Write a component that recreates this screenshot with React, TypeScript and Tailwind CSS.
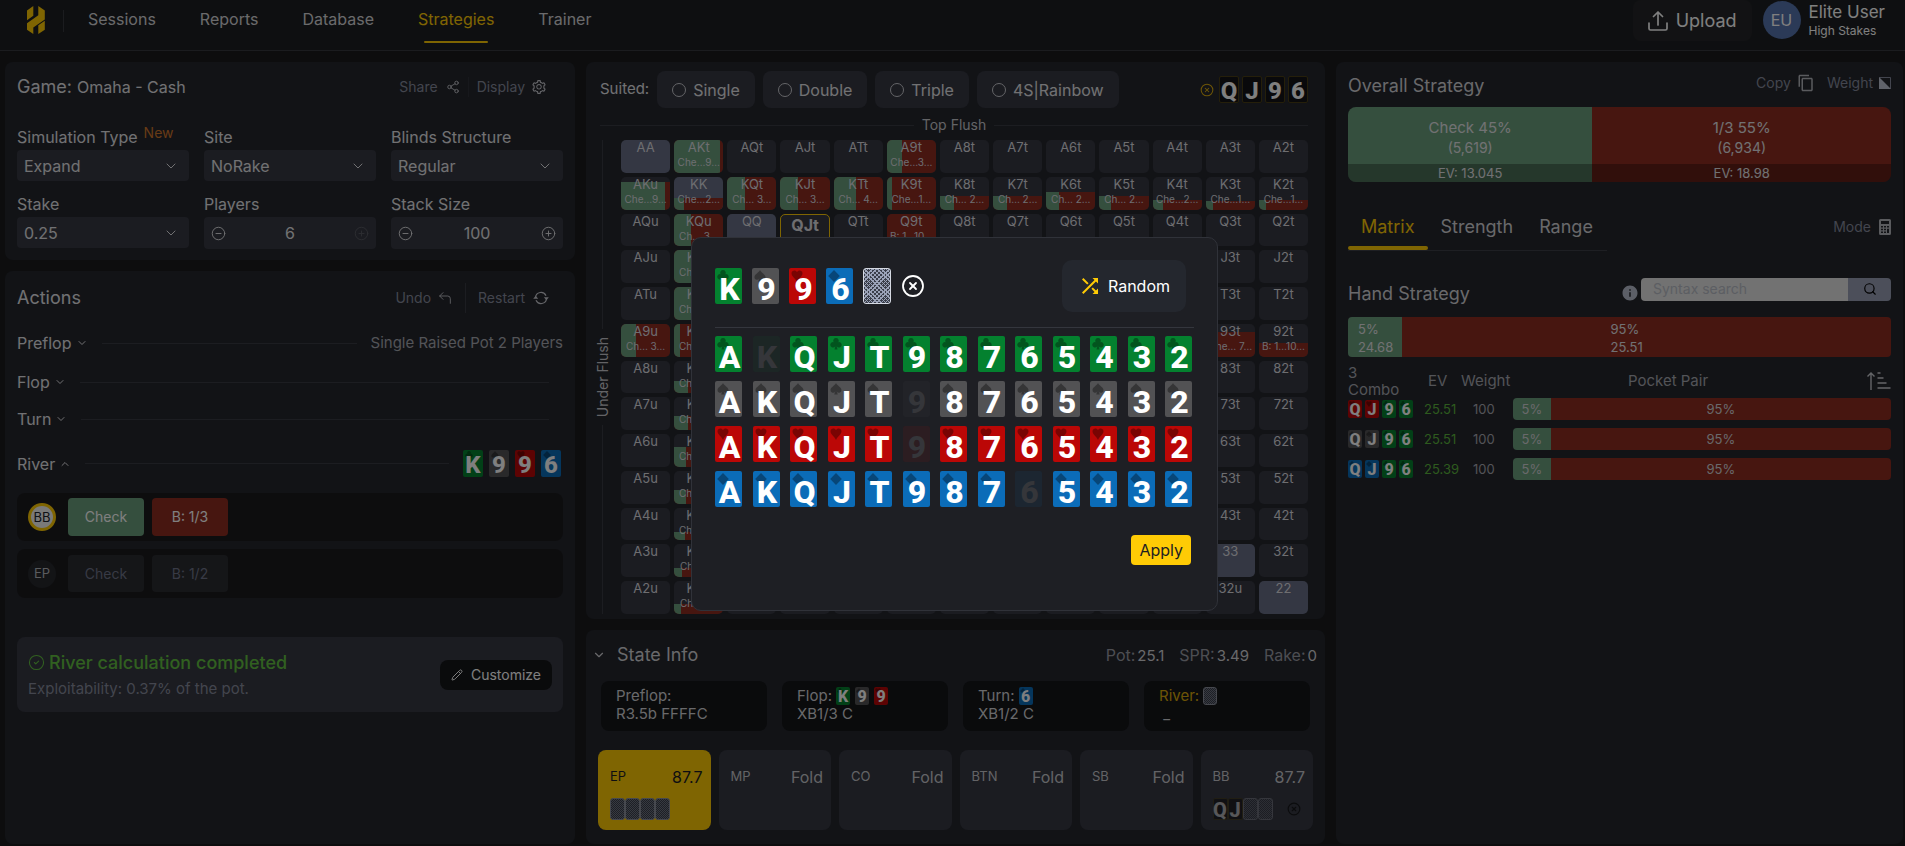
import type { ReactNode } from 'react'
import clsx from 'clsx'
import {
  ChevronDown,
  ChevronUp,
  CircleCheck,
  CircleMinus,
  CirclePlus,
  CircleX,
  CornerUpLeft,
  Pencil,
  Search,
  Share2,
} from 'lucide-react'
import { AiOutlineSetting } from 'react-icons/ai'
import { MdContentCopy, MdInfo, MdOutlineShuffle } from 'react-icons/md'

type Suit = 'c' | 's' | 'h' | 'd'
type CardSize = 'lg' | 'md' | 'sm' | 'seat'

const RANKS = ['A', 'K', 'Q', 'J', 'T', '9', '8', '7', '6', '5', '4', '3', '2']
const SUITS: Suit[] = ['c', 's', 'h', 'd']

const suitPath: Record<Suit, string> = {
  c: 'M6 0a2.700 2.700 0 0 1 2.300 4.200A2.700 2.700 0 1 1 6.700 8.300L7.500 11.500h-3L5.300 8.300A2.700 2.700 0 1 1 3.700 4.200 2.700 2.700 0 0 1 6 0z',
  s: 'M6 0c1 2.500 5.500 4.200 5.500 7a2.500 2.500 0 0 1-4.800 1.200L7.800 11.500H4.200L5.300 8.200A2.500 2.500 0 0 1 .5 7C.5 4.200 5 2.500 6 0z',
  h: 'M6 2C7-.300 11.500-.300 11.500 3.300 11.500 6.500 7.500 8.500 6 12 4.500 8.500.5 6.500.5 3.300.5-.300 5-.300 6 2z',
  d: 'M6 0l5.800 6L6 12 .2 6z',
}

const suitColor: Record<Suit, string> = {
  c: 'bg-[#04812f]',
  s: 'bg-[#525254]',
  h: 'bg-[#bb0706]',
  d: 'bg-[#0b6cb8]',
}

const usedColor: Record<Suit, string> = {
  c: 'bg-[#1c2625]',
  s: 'bg-[#222328]',
  h: 'bg-[#2c1d21]',
  d: 'bg-[#1c2631]',
}

const cardSize: Record<CardSize, string> = {
  lg: 'h-9 w-[27px] text-[32px] pl-0.5 pt-[5px]',
  md: 'h-[27px] w-5 text-[24px] pt-[3px]',
  sm: 'h-[18px] w-[14px] text-[16px] pt-0.5',
  seat: 'h-[22px] w-[15px] text-[20px] pt-0.5',
}

const pipSize: Record<CardSize, string> = {
  lg: 'left-0.5 top-0.5 size-3',
  md: 'left-0.5 top-px size-2',
  sm: 'left-px top-px size-1.5',
  seat: 'left-px top-px size-1.5',
}

function Card({ rank, suit, size = 'md', used }: { rank: string; suit?: Suit; size?: CardSize; used?: boolean }) {
  const color = suit ? (used ? usedColor[suit] : suitColor[suit]) : 'border border-[#4a3f14] bg-[#121316]'
  return (
    <span
      className={clsx(
        'relative flex shrink-0 items-center justify-center rounded-[2px] font-[Roboto,sans-serif] font-extrabold leading-none',
        cardSize[size],
        color,
        used ? 'text-[#35363a]' : 'text-white',
      )}
    >
      {suit && !used && (
        <svg viewBox="0 0 12 12" className={clsx('absolute fill-black/35', pipSize[size])}>
          <path d={suitPath[suit]} />
        </svg>
      )}
      <span className="relative">{rank}</span>
    </span>
  )
}

function CardBack({ className, bright }: { className: string; bright?: boolean }) {
  return (
    <span
      className={clsx(
        'shrink-0 rounded-[3px] border bg-[#3a3e4a]',
        bright
          ? 'border-[#d5d9e2] [background-image:repeating-linear-gradient(45deg,#9aa2b8_0_1px,transparent_1px_3px),repeating-linear-gradient(-45deg,#9aa2b8_0_1px,transparent_1px_3px)]'
          : 'border-[#8d919d] bg-[length:2px_2px] [background-image:conic-gradient(#6f7482_0_25%,#3a3e4a_0_50%,#6f7482_0_75%,#3a3e4a_0)]',
        className,
      )}
    />
  )
}

function Panel({ className, children }: { className?: string; children: ReactNode }) {
  return <section className={clsx('rounded-lg bg-[#24262d]', className)}>{children}</section>
}

/* ---------- header ---------- */

function Logo() {
  return (
    <svg viewBox="0 0 18 28" className="h-7 w-[18px]" fill="#ffcb05">
      <path d="M0 4.500 6.300 0v9.800L0 14.300zM11.300 0l6.500 4.500v9L6.300 21.500V28L0 23.800v-6.600l11.300-7.900zM11.300 19.300l6.500-4.600v9.100L11.300 28z" />
    </svg>
  )
}

function Header() {
  const links = ['Sessions', 'Reports', 'Database', 'Strategies', 'Trainer']
  return (
    <header className="flex h-[51px] shrink-0 items-start border-b border-[#36383e] bg-[#1d1f22] pl-[27px] pr-5">
      <a href="#home" aria-label="Home" className="mt-1.5">
        <Logo />
      </a>
      <div className="ml-[18px] mt-2.5 h-[22px] w-px bg-[#36383e]" />
      <nav className="ml-0.5 flex">
        {links.map((link) => (
          <a
            key={link}
            href={`#${link.toLowerCase()}`}
            className={clsx(
              'relative flex h-[43px] items-start px-[22px] pt-[7px] text-base leading-6',
              link === 'Strategies' ? 'text-[#ffcb05]' : 'text-[#d5d5d8]',
            )}
          >
            {link}
            {link === 'Strategies' && <span className="absolute inset-x-7 bottom-0 h-0.5 rounded bg-[#ffcb05]" />}
          </a>
        ))}
      </nav>
      <button className="ml-auto flex h-[41px] items-center gap-2 rounded-lg bg-[#242528] px-[15px] text-lg text-white">
        <svg viewBox="0 0 20 20" className="size-5" fill="none" stroke="currentColor" strokeWidth="1.700" strokeLinecap="round" strokeLinejoin="round">
          <path d="M10 14V1.500M5.500 5.500 10 1l4.500 4.500M1 12v5.500A1.500 1.500 0 0 0 2.500 19h15a1.500 1.500 0 0 0 1.500-1.500V12" />
        </svg>
        Upload
      </button>
      <div className="ml-[11px] mt-px flex gap-2">
        <span className="flex size-[38px] items-center justify-center rounded-full bg-[#5674ae] text-base text-white">EU</span>
        <div className="text-white">
          <div className="text-[17px] leading-[22px]">Elite User</div>
          <div className="text-xs leading-4">High Stakes</div>
        </div>
      </div>
    </header>
  )
}

/* ---------- left column ---------- */

function Field({ id, label, badge, children }: { id: string; label: string; badge?: string; children: ReactNode }) {
  return (
    <div className="min-w-0">
      <label htmlFor={id} className="flex h-[26px] items-center text-base leading-5 text-[#e3e3e6]">
        {label}
        {badge && <span className="mb-2 ml-1.5 text-sm leading-5 text-[#d0762a]">{badge}</span>}
      </label>
      {children}
    </div>
  )
}

function SelectField({ id, label, badge, value }: { id: string; label: string; badge?: string; value: string }) {
  return (
    <Field id={id} label={label} badge={badge}>
      <div className="relative">
        <select id={id} className="h-[31px] w-full appearance-none rounded bg-[#363842] px-[7px] text-base text-[#e3e3e6]">
          <option>{value}</option>
        </select>
        <ChevronDown className="pointer-events-none absolute right-2.5 top-2 size-4 text-[#e3e3e6]" strokeWidth={1.5} />
      </div>
    </Field>
  )
}

function StepperField({ id, label, value, maxed }: { id: string; label: string; value: string; maxed?: boolean }) {
  return (
    <Field id={id} label={label}>
      <div className="flex h-8 items-center rounded bg-[#363842] px-[7px] text-[#e3e3e6]">
        <button aria-label={`Decrease ${label}`}>
          <CircleMinus className="size-[15px]" strokeWidth={1.5} />
        </button>
        <input id={id} className="w-0 flex-1 bg-transparent text-center text-base" defaultValue={value} />
        <button aria-label={`Increase ${label}`} disabled={maxed} className="disabled:opacity-20">
          <CirclePlus className="size-[15px]" strokeWidth={1.5} />
        </button>
      </div>
    </Field>
  )
}

function GamePanel() {
  return (
    <Panel className="px-3 pb-[11px] pt-3">
      <div className="flex h-[26px] items-center">
        <h2 className="text-lg text-[#e3e3e6]">
          Game: <span className="text-base">Omaha - Cash</span>
        </h2>
        <div className="ml-auto mr-4 flex items-center text-sm text-[#868b9c]">
          <button className="flex items-center gap-2 pr-2">
            Share <Share2 className="size-[14px] text-[#c9cad0]" strokeWidth={1.5} />
          </button>
          <button className="flex items-center gap-1.5 border-l border-[#2f3139] pl-2">
            Display <AiOutlineSetting className="size-4 text-[#c9cad0]" />
          </button>
        </div>
      </div>
      <div className="mt-6 grid grid-cols-3 gap-x-[15px] gap-y-2.5">
        <SelectField id="sim" label="Simulation Type" badge="New" value="Expand" />
        <SelectField id="site" label="Site" value="NoRake" />
        <SelectField id="blinds" label="Blinds Structure" value="Regular" />
        <SelectField id="stake" label="Stake" value="0.25" />
        <StepperField id="players" label="Players" value="6" maxed />
        <StepperField id="stack" label="Stack Size" value="100" />
      </div>
    </Panel>
  )
}

function Street({ name, open, className, children }: { name: string; open?: boolean; className: string; children?: ReactNode }) {
  const Chevron = open ? ChevronUp : ChevronDown
  return (
    <div className={clsx('flex items-center text-[#e3e3e6]', className)}>
      <button className="flex items-center gap-1">
        {name} <Chevron className="size-3" strokeWidth={2} />
      </button>
      <div className="mx-3.5 h-px flex-1 bg-[#383a43]" />
      {children}
    </div>
  )
}

function ActionsPanel() {
  return (
    <Panel className="flex-1 px-3 pt-3">
      <div className="flex h-[30px] items-center">
        <h2 className="text-lg text-[#e3e3e6]">Actions</h2>
        <div className="ml-auto mr-[14px] flex h-full items-center text-sm text-[#868b9c]">
          <button className="flex h-full items-center gap-1.5 pr-3">
            Undo <CornerUpLeft className="size-4 text-[#c9cad0]" strokeWidth={1.3} />
          </button>
          <button className="flex h-full items-center gap-2 border-l border-[#383a43] pl-3">
            Restart
            <svg viewBox="0 0 16 14" className="h-3.5 w-4 text-[#c9cad0]" fill="none" stroke="currentColor" strokeWidth="1.200">
              <path d="M2.500 6.500A5.500 5.500 0 0 1 13 4.700M13.500 7.500A5.500 5.500 0 0 1 3 9.300" />
              <path d="M10.800 6.300h5l-2.300 3zM.2 7.700h5l-2.500-3z" fill="currentColor" stroke="none" />
            </svg>
          </button>
        </div>
      </div>
      <Street name="Preflop" className="mt-[18px] h-6">
        <span className="text-[15px] text-[#a6a8b0]">Single Raised Pot 2 Players</span>
      </Street>
      <Street name="Flop" className="mt-[15px] h-6" />
      <Street name="Turn" className="mt-[13px] h-6" />
      <Street name="River" open className="mt-[19px] h-[27px]">
        <div className="flex gap-1.5 pr-0.5">
          <Card rank="K" suit="c" />
          <Card rank="9" suit="s" />
          <Card rank="9" suit="h" />
          <Card rank="6" suit="d" />
        </div>
      </Street>

      <div className="mt-4 flex h-12 items-center gap-2 rounded-lg bg-[#1b1b1d] px-[11px] text-sm">
        <span className="mr-1 flex size-7 items-center justify-center rounded-full border-[3px] border-[#ffcb05] bg-[#f4f4f4] text-[13px] text-[#22252c]">
          BB
        </span>
        <button className="h-[38px] w-[76px] rounded bg-[#6a9e7c] text-white">Check</button>
        <button className="h-[38px] w-[76px] rounded bg-[#8e2c20] text-white">B: 1/3</button>
      </div>
      <div className="mt-2 flex h-[49px] items-center gap-2 rounded-lg bg-[#1b1b1d] px-[11px] text-sm">
        <span className="mr-1 flex size-7 items-center justify-center rounded-full bg-[#26282d] text-[13px] text-[#b5b7bd]">EP</span>
        <button className="h-[37px] w-[76px] rounded bg-[#2a2c31] text-[#70758a]">Check</button>
        <button className="h-[37px] w-[76px] rounded bg-[#2a2c31] text-[#70758a]">B: 1/2</button>
      </div>

      <div className="mt-[39px] flex h-[75px] items-center rounded-lg bg-[#363842] px-[11px]">
        <div>
          <p className="flex items-center gap-1 text-lg font-medium leading-7 text-[#62c040]">
            <CircleCheck className="size-[17px]" strokeWidth={1.5} /> River calculation completed
          </p>
          <p className="text-[15px] leading-6 text-[#868b9c]">Exploitability: 0.37% of the pot.</p>
        </div>
        <button className="ml-auto flex h-[30px] items-center gap-2 rounded-lg bg-[#141618] px-[11px] text-sm text-white">
          <Pencil className="size-3" strokeWidth={2} /> Customize
        </button>
      </div>
    </Panel>
  )
}

/* ---------- strategy matrix ---------- */

interface Fill {
  text: string
  height: number
  check: number
}

const fills: Record<string, Fill> = {
  AKt: { text: 'Che…9…', height: 100, check: 93 },
  A9t: { text: 'Che…3…', height: 100, check: 30 },
  AKu: { text: 'Che…9…', height: 84, check: 90 },
  KK: { text: 'Che…2…', height: 36, check: 20 },
  KQt: { text: 'Ch… 3…', height: 100, check: 37 },
  KJt: { text: 'Ch… 3…', height: 100, check: 35 },
  KTt: { text: 'Ch… 4…', height: 100, check: 45 },
  K9t: { text: 'Che…1…', height: 100, check: 10 },
  K8t: { text: 'Ch… 2…', height: 42, check: 28 },
  K7t: { text: 'Ch… 2…', height: 42, check: 28 },
  K6t: { text: 'Ch… 2…', height: 54, check: 27 },
  K5t: { text: 'Ch… 2…', height: 42, check: 24 },
  K4t: { text: 'Che…2…', height: 30, check: 22 },
  K3t: { text: 'Che…1…', height: 27, check: 14 },
  K2t: { text: 'Che…1…', height: 30, check: 14 },
  KQu: { text: 'Ch… 3…', height: 100, check: 35 },
  Q9t: { text: 'B: 1…10…', height: 100, check: 0 },
  KJu: { text: 'Ch… 3…', height: 100, check: 35 },
  KTu: { text: 'Ch… 4…', height: 100, check: 42 },
  K9u: { text: 'Che…1…', height: 100, check: 12 },
  K8u: { text: 'Ch… 2…', height: 39, check: 28 },
  K7u: { text: 'Ch… 2…', height: 42, check: 28 },
  K6u: { text: 'Ch… 2…', height: 60, check: 24 },
  K5u: { text: 'Ch… 2…', height: 42, check: 24 },
  K4u: { text: 'Ch… 2…', height: 27, check: 22 },
  K3u: { text: 'Ch… 1…', height: 27, check: 16 },
  K2u: { text: 'Ch… 1…', height: 30, check: 14 },
  A9u: { text: 'Ch… 3…', height: 100, check: 30 },
  '93t': { text: 'Che… 7…', height: 76, check: 6 },
  '92t': { text: 'B: 1…10…', height: 42, check: 0 },
}

function handName(row: number, col: number) {
  if (row === col) return RANKS[row] + RANKS[col]
  return col > row ? `${RANKS[row]}${RANKS[col]}t` : `${RANKS[col]}${RANKS[row]}u`
}

function MatrixCell({ row, col }: { row: number; col: number }) {
  const name = handName(row, col)
  const fill = fills[name]
  const selected = name === 'QJt'
  return (
    <button
      className={clsx(
        'relative flex min-w-0 flex-col items-center overflow-hidden rounded-[5px] text-[#dcdce0]',
        row === col ? 'bg-[#686e86]' : 'bg-[#363842]',
        selected && 'border border-[#ffcb05] pt-0.5',
      )}
    >
      {fill && (
        <span className="absolute inset-x-0 bottom-0 flex bg-[#8e2c20]" style={{ height: `${fill.height}%` }}>
          <span className="bg-[#6a9e7c]" style={{ width: `${fill.check}%` }} />
        </span>
      )}
      <span className={clsx('relative', selected ? 'text-base font-bold leading-4' : 'text-[13px] leading-[15px]')}>{name}</span>
      {fill && <span className="relative whitespace-nowrap text-[10px] leading-[14px]">{fill.text}</span>}
    </button>
  )
}

function MatrixPanel() {
  const filters = ['Single', 'Double', 'Triple', '4S|Rainbow']
  return (
    <Panel className="flex flex-1 flex-col pb-[5px] pl-2.5 pr-[17px] pt-[9px]">
      <div className="flex items-center gap-2 pl-1">
        <span className="text-[15px] text-[#e3e3e6]">Suited:</span>
        {filters.map((name) => (
          <label key={name} className="flex h-[37px] items-center gap-[7px] rounded-lg bg-[#363842] px-[15px] text-base text-[#e3e3e6]">
            <input type="radio" name="suited" className="size-[14px] appearance-none rounded-full border border-[#c9cad0]" />
            {name}
          </label>
        ))}
        <div className="ml-auto flex items-center gap-[3px]">
          <button aria-label="Clear hand" className="mr-0.5 text-[#d9a90c]">
            <CircleX className="size-[14px]" strokeWidth={1.8} />
          </button>
          <Card rank="Q" />
          <Card rank="J" />
          <Card rank="9" />
          <Card rank="6" />
        </div>
      </div>

      <div className="mt-1.5 flex h-[22px] items-center gap-2 pl-1 text-sm text-[#c6c7cc]">
        <div className="h-px flex-1 bg-[#383a43]" />
        Top Flush
        <div className="h-px flex-1 bg-[#383a43]" />
      </div>

      <div className="mt-1 flex flex-1 gap-3">
        <div className="flex w-[13px] flex-col items-center gap-2 text-sm leading-[13px] text-[#c6c7cc]">
          <div className="w-px flex-1 bg-[#383a43]" />
          <span className="rotate-180 [writing-mode:vertical-rl]">Under Flush</span>
          <div className="w-px flex-1 bg-[#383a43]" />
        </div>
        <div className="grid flex-1 grid-cols-13 grid-rows-13 gap-1">
          {RANKS.map((_, row) => RANKS.map((_, col) => <MatrixCell key={`${row}-${col}`} row={row} col={col} />))}
        </div>
      </div>
    </Panel>
  )
}

/* ---------- state info ---------- */

function Stat({ label, value }: { label: string; value: string }) {
  return (
    <span className="text-[#9a9ca5]">
      {label}:<span className="ml-0.5 text-[15px] text-[#d2d2d6]">{value}</span>
    </span>
  )
}

function StreetBox({ title, line, active, children }: { title: string; line: string; active?: boolean; children?: ReactNode }) {
  return (
    <div className="h-[50px] rounded-lg bg-[#141618] px-[15px] pt-1.5 text-[15px] text-[#d2d2d6]">
      <div className="flex h-[18px] items-center gap-1">
        <span className={clsx(active && 'text-[#d9a90c]')}>{title}:</span>
        <span className="flex gap-[5px]">{children}</span>
      </div>
      <div className="leading-[17px]">{line}</div>
    </div>
  )
}

function Seat({ name, value, active, children }: { name: string; value: string; active?: boolean; children?: ReactNode }) {
  return (
    <div
      className={clsx(
        'flex h-20 flex-col rounded-lg px-3 pt-4',
        active ? 'bg-[#ffcb05] text-[#1c1d22]' : 'bg-[#363842] text-[#c6c7cc]',
      )}
    >
      <div className="-mr-1 flex h-[22px] items-center justify-between text-[13px]">
        {name} <span className="text-base">{value}</span>
      </div>
      <div className="mt-2.5 flex items-center">{children}</div>
    </div>
  )
}

function StatePanel() {
  const back = 'h-[22px] w-[15px]'
  return (
    <Panel className="px-3 pb-3.5 pt-3">
      <div className="flex h-[26px] items-center">
        <button aria-label="Collapse state info" className="-ml-1.5">
          <ChevronDown className="size-3.5 text-[#d2d2d6]" />
        </button>
        <h2 className="ml-[11px] text-lg text-[#d2d2d6]">State Info</h2>
        <div className="-mr-1 ml-auto flex gap-[15px] text-base">
          <Stat label="Pot" value="25.1" />
          <Stat label="SPR" value="3.49" />
          <Stat label="Rake" value="0" />
        </div>
      </div>
      <div className="mt-[13px] grid grid-cols-4 gap-[15px] px-[3px]">
        <StreetBox title="Preflop" line="R3.5b FFFFC" />
        <StreetBox title="Flop" line="XB1/3 C">
          <Card rank="K" suit="c" size="sm" />
          <Card rank="9" suit="s" size="sm" />
          <Card rank="9" suit="h" size="sm" />
        </StreetBox>
        <StreetBox title="Turn" line="XB1/2 C">
          <Card rank="6" suit="d" size="sm" />
        </StreetBox>
        <StreetBox title="River" line="&nbsp;_" active>
          <CardBack className="h-[18px] w-[14px]" />
        </StreetBox>
      </div>
      <div className="mt-[19px] grid grid-cols-6 gap-2">
        <Seat name="EP" value="87.7" active>
          <CardBack className={back} />
          <CardBack className={back} />
          <CardBack className={back} />
          <CardBack className={back} />
        </Seat>
        <Seat name="MP" value="Fold" />
        <Seat name="CO" value="Fold" />
        <Seat name="BTN" value="Fold" />
        <Seat name="SB" value="Fold" />
        <Seat name="BB" value="87.7">
          <span className="flex opacity-60">
            <Card rank="Q" size="seat" />
            <Card rank="J" size="seat" />
            <CardBack className={back} />
            <CardBack className={back} />
          </span>
          <button aria-label="Clear BB hand" className="ml-auto text-[#17181b]">
            <CircleX className="size-[14px]" />
          </button>
        </Seat>
      </div>
    </Panel>
  )
}

/* ---------- right column ---------- */

function OverallBar({ title, count, ev, className, share }: { title: string; count: string; ev: string; className: string; share: number }) {
  return (
    <div className={clsx('flex flex-col text-center text-[#e3e3e6]', className)} style={{ width: `${share}%` }}>
      <div className="pt-[11px] text-[15px] leading-5">{title}</div>
      <div className="flex-1 text-sm leading-5">{count}</div>
      <div className="bg-black/30 text-[13px] leading-[18px]">{ev}</div>
    </div>
  )
}

const combos: { suit: Suit; ev: string }[] = [
  { suit: 'h', ev: '25.51' },
  { suit: 's', ev: '25.51' },
  { suit: 'd', ev: '25.39' },
]

function StrategyPanel() {
  return (
    <Panel className="px-3 pt-[11px]">
      <div className="flex h-[26px] items-center">
        <h2 className="text-lg text-[#d2d2d6]">Overall Strategy</h2>
        <div className="mb-1.5 ml-auto flex gap-3 text-sm text-[#868b9c]">
          <button className="flex items-center gap-1.5">
            Copy <MdContentCopy className="size-[18px] text-[#b5b7bd]" />
          </button>
          <button className="flex items-center gap-1.5">
            Weight
            <svg viewBox="0 0 12 12" className="size-3">
              <path d="M.5.5h11v11H.5z" fill="none" stroke="#868b9c" />
              <path d="M0 0v12h12z" fill="#c0c6d4" />
            </svg>
          </button>
        </div>
      </div>
      <div className="mt-2 flex h-[75px] overflow-hidden rounded-lg">
        <OverallBar title="Check 45%" count="(5,619)" ev="EV: 13.045" className="bg-[#6a9e7c]" share={45} />
        <OverallBar title="1/3 55%" count="(6,934)" ev="EV: 18.98" className="bg-[#8e2c20]" share={55} />
      </div>

      <div className="mt-[27px] flex items-start justify-between">
        <div className="flex border-b border-[#3c3e46] pr-3.5 text-lg">
          <button className="relative h-[41px] px-[13px] pb-1.5 text-[#ffcb05]">
            Matrix
            <span className="absolute inset-x-0 bottom-0 h-1 rounded-sm bg-[#ffcb05]" />
          </button>
          <button className="h-[41px] px-[13px] pb-1.5 text-[#d2d2d6]">Strength</button>
          <button className="h-[41px] pb-1.5 pl-[13px] text-[#d2d2d6]">Range</button>
        </div>
        <button className="mt-2 flex items-center gap-2 text-sm text-[#868b9c]">
          Mode
          <svg viewBox="0 0 12 16" className="h-4 w-3" fill="#b5b7bd">
            <path
              fillRule="evenodd"
              d="M1.500 0h9A1.500 1.500 0 0 1 12 1.500v13a1.500 1.500 0 0 1-1.500 1.500h-9A1.500 1.500 0 0 1 0 14.500v-13A1.500 1.500 0 0 1 1.500 0zM2 2v3h8V2zM2 7v1.600h2V7zM5 7v1.600h2V7zM8 7v1.600h2V7zM2 9.700v1.600h2V9.700zM5 9.700v1.600h2V9.700zM8 9.700v4.300h2V9.700zM2 12.400V14h2v-1.600zM5 12.400V14h2v-1.600z"
            />
          </svg>
        </button>
      </div>

      <div className="mt-[27px] flex h-[26px] items-center">
        <h2 className="mt-1.5 text-lg text-[#d2d2d6]">Hand Strategy</h2>
        <MdInfo className="ml-auto mr-0.5 mt-1 size-[18px] text-[#b9bfce]" />
        <div className="mb-1 flex h-[23px] w-[250px] overflow-hidden rounded">
          <input
            aria-label="Syntax search"
            placeholder="Syntax search"
            className="w-0 flex-1 bg-[#e4e4e4] px-3 text-sm placeholder:text-[#b9bdc6]"
          />
          <button aria-label="Search" className="flex w-[43px] items-center justify-center bg-[#989fb5]">
            <Search className="size-3.5 text-black" />
          </button>
        </div>
      </div>

      <div className="mt-[13px] flex h-10 overflow-hidden rounded text-[13px] leading-[18px] text-[#e3e3e6]">
        <div className="w-1/10 bg-[#6a9e7c] pl-2.5 pt-[3px]">
          5%
          <br />
          24.68
        </div>
        <div className="flex flex-1 justify-center bg-[#8e2c20] pt-[3px]">
          <span className="mr-10">
            95%
            <br />
            25.51
          </span>
        </div>
      </div>

      <table className="mt-1.5 w-full table-fixed text-left text-[#a6a8b0]">
        <colgroup>
          <col className="w-[70px]" />
          <col className="w-[43px]" />
          <col className="w-[52px]" />
          <col />
        </colgroup>
        <thead className="text-[15px] leading-[17px]">
          <tr className="h-[35px]">
            <th className="font-normal">
              3<br />
              Combo
            </th>
            <th className="pl-2.5 font-normal">EV</th>
            <th className="font-normal">Weight</th>
            <th className="font-normal">
              <div className="flex items-center">
                <span className="flex-1 pr-11 text-center">Pocket Pair</span>
                <button aria-label="Sort">
                  <svg viewBox="0 0 24 18" className="h-[18px] w-6 text-[#c9cad0]" fill="none" stroke="currentColor" strokeWidth="1.400">
                    <path d="M4 18V1M.5 4.500 4 1l3.500 3.500M10.500 1h3M10.500 6h6M10.500 11h9M10.500 16h13" />
                  </svg>
                </button>
              </div>
            </th>
          </tr>
        </thead>
        <tbody className="align-top text-[13px] leading-[22px] text-[#d2d2d6]">
          {combos.map(({ suit, ev }) => (
            <tr key={suit} className="h-[30px]">
              <td>
                <div className="flex gap-[3px] pt-0.5">
                  <Card rank="Q" suit={suit} size="sm" />
                  <Card rank="J" suit={suit} size="sm" />
                  <Card rank="9" suit="c" size="sm" />
                  <Card rank="6" suit="c" size="sm" />
                </div>
              </td>
              <td className="pl-1.5 text-[#5cb53c]">{ev}</td>
              <td className="pl-3 text-[#a6a8b0]">100</td>
              <td>
                <div className="flex h-[22px] overflow-hidden rounded text-center">
                  <div className="w-1/10 bg-[#6a9e7c]">5%</div>
                  <div className="flex-1 bg-[#8e2c20]">95%</div>
                </div>
              </td>
            </tr>
          ))}
        </tbody>
      </table>
    </Panel>
  )
}

/* ---------- board picker ---------- */

const board: { rank: string; suit: Suit }[] = [
  { rank: 'K', suit: 'c' },
  { rank: '9', suit: 's' },
  { rank: '9', suit: 'h' },
  { rank: '6', suit: 'd' },
]

function BoardDialog() {
  return (
    <div className="fixed inset-0 flex items-center justify-center bg-black/50 pl-1 pt-0.5">
      <div role="dialog" aria-label="Select board" className="w-[527px] rounded-[10px] border border-[#303239] bg-[#1e1f24] px-[23px] pb-[45px] pt-[22px]">
        <div className="flex items-center border-b border-[#34363d] pb-[15px]">
          <div className="flex gap-2.5">
            {board.map(({ rank, suit }) => (
              <Card key={rank + suit} rank={rank} suit={suit} size="lg" />
            ))}
            <CardBack className="h-9 w-7" bright />
          </div>
          <button aria-label="Clear board" className="ml-2.5 text-white">
            <CircleX className="size-6" strokeWidth={1.8} />
          </button>
          <button className="ml-auto mr-2 flex h-[52px] items-center gap-1.5 rounded-[10px] bg-[#24272e] px-4 text-base text-white">
            <MdOutlineShuffle className="size-6 text-[#ffcb05]" /> Random
          </button>
        </div>
        <div className="mt-2 flex flex-col gap-[9px]">
          {SUITS.map((suit) => (
            <div key={suit} className="flex justify-between pr-0.5">
              {RANKS.map((rank) => (
                <button key={rank} aria-label={`${rank}${suit}`}>
                  <Card rank={rank} suit={suit} size="lg" used={board.some((c) => c.rank === rank && c.suit === suit)} />
                </button>
              ))}
            </div>
          ))}
        </div>
        <div className="mt-7 flex justify-end pr-[3px]">
          <button className="h-[30px] rounded bg-[#ffcb05] px-2 text-base text-[#1c1d22]">Apply</button>
        </div>
      </div>
    </div>
  )
}

export default function App() {
  return (
    <div className="flex min-h-screen flex-col bg-[#1a1b1d] font-[Inter,'Noto_Sans',sans-serif]">
      <Header />
      <main className="grid flex-1 grid-cols-[570fr_739fr_567fr] gap-[11px] pb-0.5 pl-[5px] pr-0.5 pt-[11px]">
        <div className="flex min-w-0 flex-col gap-[11px]">
          <GamePanel />
          <ActionsPanel />
        </div>
        <div className="flex min-w-0 flex-col gap-[11px]">
          <MatrixPanel />
          <StatePanel />
        </div>
        <StrategyPanel />
      </main>
      <BoardDialog />
    </div>
  )
}
